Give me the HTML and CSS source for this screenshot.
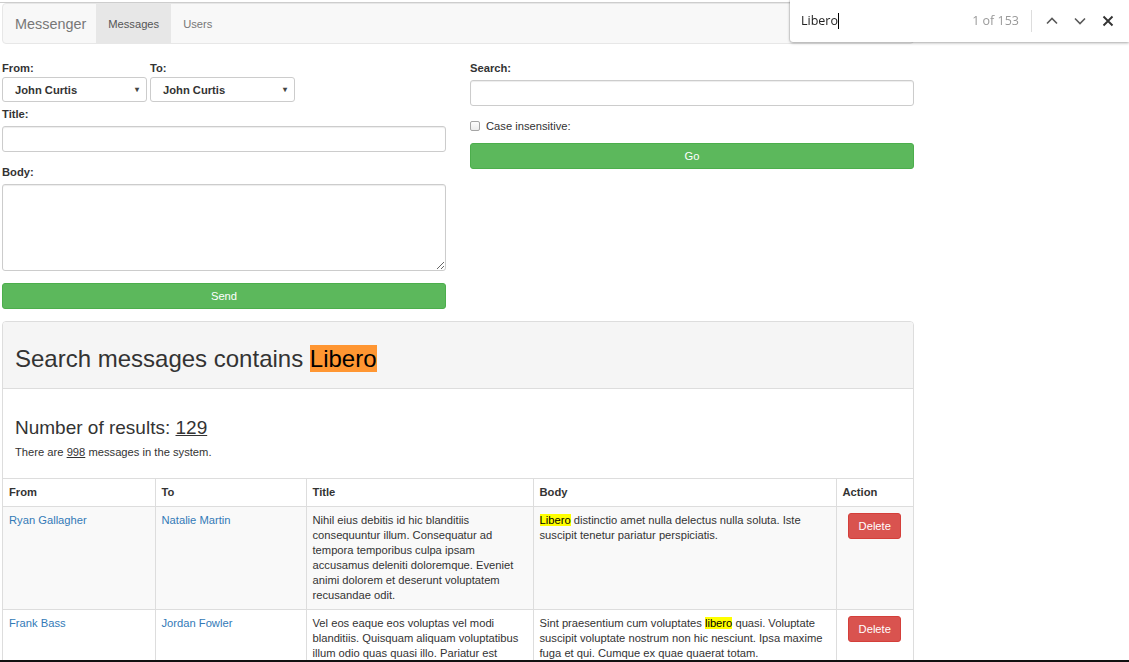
FILE: index.html
```html
<!DOCTYPE html>
<html lang="en">
<head>
<meta charset="utf-8">
<title>Messenger</title>
<link rel="stylesheet" href="styles.css">
</head>
<body>
<div class="page">
  <nav class="navbar">
    <span class="brand">Messenger</span>
    <a class="nav-item active">Messages</a>
    <a class="nav-item">Users</a>
  </nav>

  <div class="forms">
    <form class="col">
      <div class="pair">
        <div class="pick">
          <label>From:</label>
          <div class="select"><span>John Curtis</span><span class="caret">&#9662;</span></div>
        </div>
        <div class="pick">
          <label>To:</label>
          <div class="select"><span>John Curtis</span><span class="caret">&#9662;</span></div>
        </div>
      </div>
      <div class="group">
        <label class="lbl">Title:</label>
        <input class="input" type="text">
      </div>
      <div class="group">
        <label class="lbl">Body:</label>
        <textarea class="input area"></textarea>
      </div>
      <button type="button" class="btn green">Send</button>
    </form>

    <form class="col">
      <div class="group">
        <label class="lbl">Search:</label>
        <input class="input" type="text">
      </div>
      <div class="check-row">
        <span class="checkbox"></span>
        <span>Case insensitive:</span>
      </div>
      <button type="button" class="btn green go">Go</button>
    </form>
  </div>

  <section class="panel">
    <div class="panel-heading">
      <h2>Search messages contains <mark class="active-hit">Libero</mark></h2>
    </div>
    <div class="panel-body">
      <h3>Number of results: <u>129</u></h3>
      <p>There are <u>998</u> messages in the system.</p>
    </div>
    <table class="table">
      <colgroup>
        <col class="c-from"><col class="c-to"><col class="c-title"><col class="c-body"><col class="c-action">
      </colgroup>
      <thead>
        <tr><th>From</th><th>To</th><th>Title</th><th>Body</th><th>Action</th></tr>
      </thead>
      <tbody>
        <tr>
          <td><a class="link">Ryan Gallagher</a></td>
          <td><a class="link">Natalie Martin</a></td>
          <td>Nihil eius debitis id hic blanditiis consequuntur illum. Consequatur ad tempora temporibus culpa ipsam accusamus deleniti doloremque. Eveniet animi dolorem et deserunt voluptatem recusandae odit.</td>
          <td><mark class="hit">Libero</mark> distinctio amet nulla delectus nulla soluta. Iste suscipit tenetur pariatur perspiciatis.</td>
          <td class="action"><button type="button" class="btn red">Delete</button></td>
        </tr>
        <tr>
          <td><a class="link">Frank Bass</a></td>
          <td><a class="link">Jordan Fowler</a></td>
          <td>Vel eos eaque eos voluptas vel modi blanditiis. Quisquam aliquam voluptatibus illum odio quas quasi illo. Pariatur est necessitatibus dolores quia.</td>
          <td>Sint praesentium cum voluptates <mark class="hit">libero</mark> quasi. Voluptate suscipit voluptate nostrum non hic nesciunt. Ipsa maxime fuga et qui. Cumque ex quae quaerat totam.</td>
          <td class="action"><button type="button" class="btn red">Delete</button></td>
        </tr>
      </tbody>
    </table>
  </section>
</div>

<div class="findbar">
  <div class="find-field"><span class="find-text">Libero</span><span class="cursor"></span></div>
  <span class="find-count">1 of 153</span>
  <span class="find-sep"></span>
  <span class="find-btn">
    <svg width="12" height="8" viewBox="0 0 12 8"><path d="M1 6.5 L6 1.5 L11 6.5" fill="none" stroke="#5a5a5a" stroke-width="1.6"/></svg>
  </span>
  <span class="find-btn">
    <svg width="12" height="8" viewBox="0 0 12 8"><path d="M1 1.5 L6 6.5 L11 1.5" fill="none" stroke="#5a5a5a" stroke-width="1.6"/></svg>
  </span>
  <span class="find-btn">
    <svg width="12" height="12" viewBox="0 0 12 12"><path d="M1.5 1.5 L10.5 10.5 M10.5 1.5 L1.5 10.5" fill="none" stroke="#333" stroke-width="1.9"/></svg>
  </span>
</div>
<div class="bottom-edge"></div>
</body>
</html>
```

FILE: styles.css
```css
html { background: #fff; }
body {
  margin: 2px 0 0 0;
  border-top: 1px solid #cdcdcd;
  font-family: "Liberation Sans", Arial, Helvetica, sans-serif;
  font-size: 11.2px;
  line-height: 16px;
  color: #333;
  overflow: hidden;
}

.page {
  width: 912px;
  margin-left: 2px;
}

/* navbar */
.navbar {
  display: flex;
  height: 39px;
  border: 1px solid #e7e7e7;
  border-radius: 4px;
  background: #f8f8f8;
  margin-bottom: 16px;
}
.brand {
  display: flex;
  align-items: center;
  padding: 0 10px 0 12px;
  font-size: 14.4px;
  color: #777;
}
.nav-item {
  display: flex;
  align-items: center;
  padding: 0 12px;
  color: #777;
}
.nav-item.active {
  background: #e7e7e7;
  color: #555;
}

/* forms */
.forms {
  display: grid;
  grid-template-columns: 444px 444px;
  column-gap: 24px;
}
.col { margin: 0; }
label, .lbl {
  display: block;
  font-weight: bold;
  line-height: 16px;
}
.pair {
  display: flex;
  gap: 3px;
  margin-bottom: 4px;
}
.pick label { margin-bottom: 1px; }
.select {
  box-sizing: border-box;
  width: 145px;
  height: 25px;
  border: 1px solid #ccc;
  border-radius: 3px;
  background: #fff;
  display: flex;
  align-items: center;
  justify-content: space-between;
  padding: 0 7px 0 12px;
  font-weight: bold;
}
.caret {
  font-size: 8px;
  color: #444;
}
.group { margin-bottom: 12px; }
.group .lbl { margin-bottom: 4px; }
.input {
  display: block;
  box-sizing: border-box;
  width: 100%;
  height: 26px;
  margin: 0;
  border: 1px solid #ccc;
  border-radius: 3px;
  background: #fff;
  box-shadow: inset 0 1px 1px rgba(0,0,0,.075);
  font: inherit;
}
.area {
  height: 87px;
  resize: vertical;
}
.btn {
  display: block;
  box-sizing: border-box;
  height: 26px;
  margin: 0;
  border-radius: 3px;
  font: inherit;
  color: #fff;
  text-align: center;
  padding: 0;
}
.green {
  width: 100%;
  background: #5cb85c;
  border: 1px solid #4cae4c;
}
.go { margin-top: 9px; }
.check-row {
  display: flex;
  align-items: center;
  gap: 6px;
  height: 16px;
}
.checkbox {
  box-sizing: border-box;
  width: 10px;
  height: 10px;
  border: 1px solid #a5a5a5;
  border-radius: 2px;
  background: linear-gradient(#fdfdfd, #ececec);
}

/* panel */
.panel {
  margin-top: 12px;
  border: 1px solid #ddd;
  border-radius: 4px;
  background: #fff;
}
.panel-heading {
  background: #f5f5f5;
  border-bottom: 1px solid #ddd;
  padding: 8px 12px;
  border-radius: 3px 3px 0 0;
}
.panel-heading h2 {
  margin: 16px 0 8px;
  font-size: 24px;
  line-height: 26.4px;
  font-weight: normal;
}
.active-hit {
  background: #ff9632;
  color: #000;
}
.hit {
  background: #ffff00;
  color: #000;
}
.panel-body {
  padding: 12px;
}
.panel-body h3 {
  margin: 16px 0 6px;
  font-size: 19px;
  line-height: 21px;
  font-weight: normal;
}
.panel-body p { margin: 0 0 6px; }

/* table */
.table {
  width: 100%;
  border-collapse: collapse;
  table-layout: fixed;
}
.c-from { width: 152px; }
.c-to { width: 151px; }
.c-title { width: 227px; }
.c-body { width: 303px; }
.c-action { width: 77px; }
.table th, .table td {
  border: 1px solid #ddd;
  padding: 6px;
  line-height: 15px;
  vertical-align: top;
  text-align: left;
}
.table th { font-weight: bold; }
.table tr > :first-child { border-left: 0; }
.table tr > :last-child { border-right: 0; }
.table tbody tr:nth-child(odd) { background: #f9f9f9; }
.link { color: #337ab7; }
.table td.action { text-align: center; }
.red {
  display: inline-block;
  width: 53px;
  padding: 0;
  background: #d9534f;
  border: 1px solid #d43f3a;
}

/* browser find bar overlay */
.findbar {
  position: fixed;
  top: 0;
  right: 0;
  width: 339px;
  height: 42px;
  box-sizing: border-box;
  background: #fff;
  border-radius: 0 0 0 3px;
  box-shadow: 0 1px 3px rgba(0,0,0,.35), -1px 0 1px rgba(0,0,0,.08);
  display: flex;
  align-items: center;
  padding: 0 7px 0 11px;
  font-family: "Open Sans", "Noto Sans", sans-serif;
  font-size: 12.5px;
}
.find-field {
  flex: 1;
  display: flex;
  align-items: center;
  color: #222;
}
.cursor {
  width: 1px;
  height: 16px;
  background: #000;
}
.find-count {
  color: #999;
  margin-right: 12px;
}
.find-sep {
  width: 1px;
  height: 22px;
  background: #ddd;
  margin-right: 6px;
}
.find-btn {
  width: 28px;
  height: 28px;
  display: flex;
  align-items: center;
  justify-content: center;
}

.bottom-edge {
  position: fixed;
  left: 0;
  right: 0;
  bottom: 0;
  height: 2px;
  background: #111;
}
```
